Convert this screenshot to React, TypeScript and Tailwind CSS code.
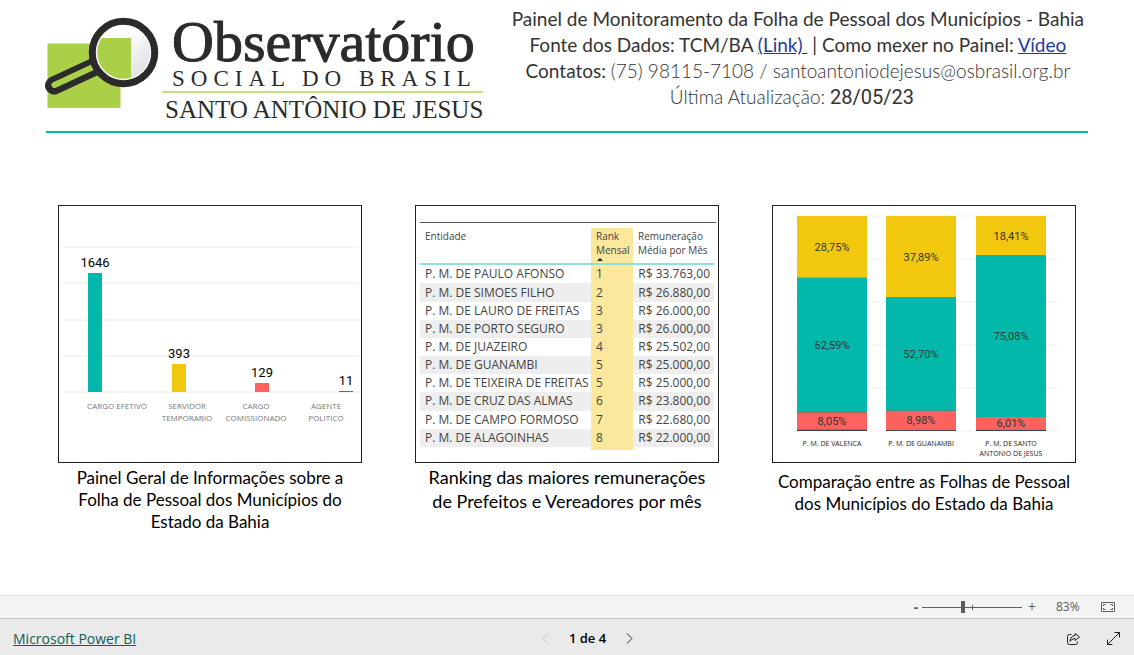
import { useState } from "react";

const categories = [
  { lines: ["CARGO EFETIVO"], value: 1646, x: 30, labelX: 59, height: 119, color: "#01b8aa" },
  { lines: ["SERVIDOR", "TEMPORARIO"], value: 393, x: 114, labelX: 129, height: 28, color: "#f2c80f" },
  { lines: ["CARGO", "COMISSIONADO"], value: 129, x: 197, labelX: 198, height: 9, color: "#fd625e" },
  { lines: ["AGENTE", "POLITICO"], value: 11, x: 281, labelX: 268, height: 1, color: "#7a5f78" },
];

const ranking = [
  ["P. M. DE PAULO AFONSO", "1", "R$ 33.763,00"],
  ["P. M. DE SIMOES FILHO", "2", "R$ 26.880,00"],
  ["P. M. DE LAURO DE FREITAS", "3", "R$ 26.000,00"],
  ["P. M. DE PORTO SEGURO", "3", "R$ 26.000,00"],
  ["P. M. DE JUAZEIRO", "4", "R$ 25.502,00"],
  ["P. M. DE GUANAMBI", "5", "R$ 25.000,00"],
  ["P. M. DE TEIXEIRA DE FREITAS", "5", "R$ 25.000,00"],
  ["P. M. DE CRUZ DAS ALMAS", "6", "R$ 23.800,00"],
  ["P. M. DE CAMPO FORMOSO", "7", "R$ 22.680,00"],
  ["P. M. DE ALAGOINHAS", "8", "R$ 22.000,00"],
];

const stacks = [
  { lines: ["P. M. DE VALENCA"], x: 25, parts: [28.75, 62.59, 8.05] },
  { lines: ["P. M. DE GUANAMBI"], x: 114, parts: [37.89, 52.7, 8.98] },
  { lines: ["P. M. DE SANTO", "ANTONIO DE JESUS"], x: 204, parts: [18.41, 75.08, 6.01] },
];

const stackColors = ["#f2c80f", "#01b8aa", "#fd625e"];

function Logo() {
  return (
    <div className="flex font-['Liberation_Serif',serif] text-[#2b2b2b]">
      <svg width="118" height="112" viewBox="44 0 118 112" className="shrink-0" aria-hidden="true">
        <defs>
          <linearGradient id="lens" x1="0" y1="0" x2="1" y2="1">
            <stop offset="0.4" stopColor="#ffffff" />
            <stop offset="1" stopColor="#d3d3d8" />
          </linearGradient>
          <clipPath id="glass">
            <circle cx="123.500" cy="52.500" r="27" />
          </clipPath>
        </defs>
        <rect x="47.500" y="43.500" width="73" height="64.500" fill="#a9d046" />
        <g strokeLinecap="round">
          <path d="M54 85.500 L95 66.500" stroke="#2b2b2b" strokeWidth="18" />
          <path d="M54.500 85 L92 67.500" stroke="#a9d046" strokeWidth="6" />
        </g>
        <circle cx="123.500" cy="52.500" r="31" fill="url(#lens)" stroke="#2b2b2b" strokeWidth="7.500" />
        <rect x="90" y="38" width="41" height="45" fill="#a9d046" clipPath="url(#glass)" />
        <circle cx="123.500" cy="52.500" r="27" fill="none" stroke="#f7f7f7" strokeWidth="1.500" />
      </svg>
      <div className="pt-3.5 whitespace-nowrap">
        <div className="pl-2.5 text-[58px] leading-[56px] [-webkit-text-stroke:1px_#2b2b2b]">Observatório</div>
        <div className="pl-2.5 text-[23px] leading-[18px] tracking-[6px]">SOCIAL DO BRASIL</div>
        <div className="mt-[3px] border-t-2 border-[#c1df7c] pl-[3px] pt-px text-[25px] leading-8">
          SANTO ANTÔNIO DE JESUS
        </div>
      </div>
    </div>
  );
}

function StaffChart() {
  return (
    <svg viewBox="0 0 302 256" className="w-full" role="img" aria-label="Quantidade por tipo de cargo">
      {[41, 77, 114, 150, 186].map((y) => (
        <line key={y} x1="4" x2="300" y1={y} y2={y} stroke="#eaeaea" />
      ))}
      {categories.map((c) => (
        <g key={c.value} textAnchor="middle">
          <rect x={c.x - 1} y={186 - c.height} width="14" height={c.height} fill={c.color} />
          <text x={c.x + 6} y={180 - c.height} className="fill-black font-['Roboto',sans-serif] text-[13px]">
            {c.value}
          </text>
          {c.lines.map((line, i) => (
            <text key={line} x={c.labelX - 1} y={203 + i * 12} className="fill-[#777] font-['Open_Sans',sans-serif] text-[8px]">
              {line}
            </text>
          ))}
        </g>
      ))}
    </svg>
  );
}

function RankingTable() {
  return (
    <div className="pl-1 pr-0.5 pt-4">
      <div className="border-t border-[#555] pr-0.5 pt-[5px]">
        <table className="h-[222px] w-full border-collapse text-left font-['Open_Sans',sans-serif] text-[12px] leading-[14px] text-[#444]">
          <thead>
            <tr className="h-9 border-b-2 border-[#8fe0d8] align-top text-[10px] leading-[14px]">
              <th className="pl-[5px] pt-px font-normal">Entidade</th>
              <th className="relative w-[42px] bg-[#fbe89c] pl-[5px] pt-px font-normal">
                Rank
                <br />
                Mensal
                <svg width="6" height="3" viewBox="0 0 6 3" className="absolute bottom-0.5 left-1.5" aria-hidden="true">
                  <path d="M0 3 L3 0 L6 3 Z" fill="#222" />
                </svg>
              </th>
              <th className="w-[81px] pl-[5px] pt-px font-normal">
                Remuneração
                <br />
                Média por Mês
              </th>
            </tr>
          </thead>
          <tbody>
            {ranking.map(([name, rank, pay]) => (
              <tr key={name} className="even:bg-[#eeeeee]">
                <td className="whitespace-nowrap pl-[5px]">{name}</td>
                <td className="bg-[#fbe89c] pl-[5px]">{rank}</td>
                <td className="whitespace-nowrap pr-1 text-right">{pay}</td>
              </tr>
            ))}
          </tbody>
          <tfoot>
            <tr className="h-[3px]">
              <td></td>
              <td className="bg-[#fbe89c]"></td>
              <td></td>
            </tr>
          </tfoot>
        </table>
      </div>
    </div>
  );
}

function ComparisonChart() {
  return (
    <svg viewBox="0 0 302 256" className="w-full" role="img" aria-label="Comparação percentual entre municípios">
      {[10, 53, 96, 139, 182, 225].map((y) => (
        <line key={y} x1="20" x2="284" y1={y} y2={y} stroke="#f0f0f0" />
      ))}
      {stacks.map((s) => {
        let top = 10;
        return (
          <g key={s.x} textAnchor="middle">
            <rect x={s.x - 1} y="10" width="70" height="215" fill="#374649" />
            {s.parts.map((part, i) => {
              const y = top;
              const height = part * 2.15;
              top += height;
              return (
                <g key={i}>
                  <rect x={s.x - 1} y={y} width="70" height={height} fill={stackColors[i]} />
                  <text x={s.x + 34} y={y + height / 2 + 4} className="fill-[#333] font-['Roboto',sans-serif] text-[11px]">
                    {part.toFixed(2).replace(".", ",")}%
                  </text>
                </g>
              );
            })}
            {s.lines.map((line, i) => (
              <text key={line} x={s.x + 34} y={240 + i * 10} className="fill-[#222] font-['Open_Sans',sans-serif] text-[7px]">
                {line}
              </text>
            ))}
          </g>
        );
      })}
    </svg>
  );
}

export default function App() {
  const [zoom, setZoom] = useState(41);

  return (
    <div className="flex min-h-screen flex-col bg-white font-['Open_Sans',sans-serif]">
      <header className="mx-[46px] flex justify-between border-b-2 border-[#01b8aa]">
        <div className="-ml-0.5 h-[131px]">
          <Logo />
        </div>
        <div className="pr-1 pt-1.5 text-center font-['Lato',sans-serif] text-[19px] leading-[26px] text-[#333]">
          <p>Painel de Monitoramento da Folha de Pessoal dos Municípios - Bahia</p>
          <p>
            Fonte dos Dados: TCM/BA{" "}
            <a href="#link" className="whitespace-pre text-[#1f3a9e] underline">{"(Link) "}</a> | Como mexer no Painel:{" "}
            <a href="#video" className="text-[#1f3a9e] underline">Vídeo</a>
          </p>
          <p>
            Contatos: <span className="font-light">(75) 98115-7108 / santoantoniodejesus@osbrasil.org.br</span>
          </p>
          <p className="pr-3">
            <span className="font-light">Última Atualização:</span>{" "}
            <span className="font-['Roboto',sans-serif] text-[20px]">28/05/23</span>
          </p>
        </div>
      </header>

      <main className="grid flex-1 grid-cols-3 items-start gap-[53px] px-[58px] pt-[72px] text-center font-['Lato',sans-serif] text-[17px] leading-[22px] text-black">
        <section>
          <div className="border border-[#222]">
            <StaffChart />
          </div>
          <h2 className="px-3 pt-1">Painel Geral de Informações sobre a Folha de Pessoal dos Municípios do Estado da Bahia</h2>
        </section>
        <section>
          <div className="h-[258px] border border-[#222]">
            <RankingTable />
          </div>
          <h2 className="px-2 pt-0.5 text-[18px] leading-6">Ranking das maiores remunerações de Prefeitos e Vereadores por mês</h2>
        </section>
        <section>
          <div className="border border-[#222]">
            <ComparisonChart />
          </div>
          <h2 className="px-1 pt-2">Comparação entre as Folhas de Pessoal dos Municípios do Estado da Bahia</h2>
        </section>
      </main>

      <footer>
        <div className="flex h-[23px] items-center justify-end border-t border-[#e0e0e0] bg-[#f4f4f4] pr-[19px] text-[#605e5c]">
          <button aria-label="Reduzir" className="w-3 text-sm font-bold leading-4">-</button>
          <div className="relative flex h-4 items-center">
            <input
              type="range"
              aria-label="Zoom"
              value={zoom}
              onChange={(e) => setZoom(Number(e.target.value))}
              className="h-px w-[100px] appearance-none bg-[#605e5c] [&::-webkit-slider-thumb]:h-3 [&::-webkit-slider-thumb]:w-1 [&::-webkit-slider-thumb]:appearance-none [&::-webkit-slider-thumb]:bg-[#605e5c]"
            />
            <span className="absolute left-1/2 h-[5px] w-px bg-[#605e5c]"></span>
          </div>
          <button aria-label="Ampliar" className="ml-1 w-3 text-sm leading-4">+</button>
          <span className="ml-[18px] w-[27px] text-xs">83%</span>
          <button aria-label="Ajustar à página" className="ml-[18px]">
            <svg width="14" height="10" viewBox="0 0 14 10" fill="none" stroke="#605e5c">
              <rect x="0.500" y="0.500" width="13" height="9" rx="0.500" />
              <path d="M4.500 2.500 H2.500 V4 M2.500 6 V7.500 H4.500 M9.500 2.500 H11.500 V4 M11.500 6 V7.500 H9.500" />
            </svg>
          </button>
        </div>
        <div className="grid h-[37px] grid-cols-3 items-center border-t border-[#c8c6c4] bg-[#eaeaea] pl-[13px] pr-3.5 pt-[3px]">
          <a href="#powerbi" className="justify-self-start text-[14px] leading-5 text-[#0b6158] underline">Microsoft Power BI</a>
          <div className="flex items-center justify-center gap-5 pl-[42px] text-[13px] font-semibold text-black">
            <button aria-label="Página anterior" disabled>
              <svg width="7" height="11" viewBox="0 0 7 11" fill="none" stroke="#c0c0c0">
                <path d="M6 0.500 L1 5.500 L6 10.500" />
              </svg>
            </button>
            <span>1 de 4</span>
            <button aria-label="Próxima página">
              <svg width="7" height="11" viewBox="0 0 7 11" fill="none" stroke="#333">
                <path d="M1 0.500 L6 5.500 L1 10.500" />
              </svg>
            </button>
          </div>
          <div className="flex items-center gap-[27px] justify-self-end">
            <button aria-label="Compartilhar">
              <svg width="13" height="12" viewBox="0 0 13 12" fill="none" stroke="#222" strokeLinejoin="round">
                <path d="M4.500 1.500 H2.500 Q0.500 1.500 0.500 3.500 V9.500 Q0.500 11.500 2.500 11.500 H8.500 Q10.500 11.500 10.500 9.500 V8.500" />
                <path d="M8 0.500 L12.500 4 L8 7.500 V5.500 Q4.500 5.500 3 8.500 Q3.300 2.800 8 2.500 Z" />
              </svg>
            </button>
            <button aria-label="Tela cheia">
              <svg width="13" height="13" viewBox="0 0 13 13" fill="none" stroke="#222">
                <path d="M0.500 12.500 L12.500 0.500 M7.500 0.500 H12.500 V5.500 M0.500 7.500 V12.500 H5.500" />
              </svg>
            </button>
          </div>
        </div>
      </footer>
    </div>
  );
}
